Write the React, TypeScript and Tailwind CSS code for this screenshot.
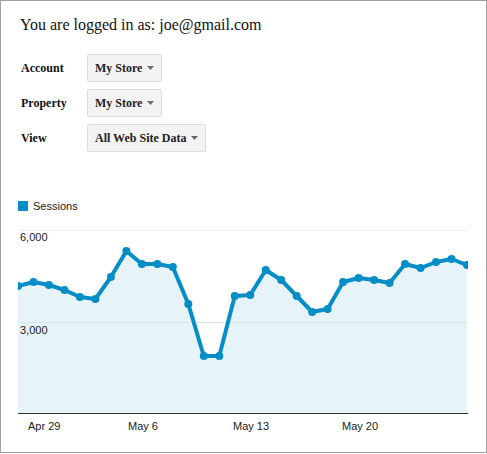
const serif = { fontFamily: '"Liberation Serif", "Times New Roman", serif' };

const rows = [
  { label: 'Account', value: 'My Store' },
  { label: 'Property', value: 'My Store' },
  { label: 'View', value: 'All Web Site Data' },
];

// sessions per day, already in page pixel space (y)
const ys = [286, 282, 285, 290, 297, 299, 277, 251, 264, 264, 267, 304, 356, 356, 296, 295, 270, 280, 296, 312, 309, 282, 278, 280, 283, 264, 268, 262, 259, 265];
const pts = ys.map((y, i) => [18 + (i * 449) / 29, y]);

function Picker({ value }: { value: string }) {
  return (
    <button className="h-[28px] flex items-center gap-[5px] pl-[7px] pr-[7px] bg-[#f3f3f3] border border-[#dcdcdc] rounded-[2px] text-[12px] font-bold text-[#222]">
      <span>{value}</span>
      <svg width="7" height="4" viewBox="0 0 7 4">
        <path d="M0 0h7L3.5 4z" fill="#6a6a6a" />
      </svg>
    </button>
  );
}

function Chart() {
  const line = pts.map((p) => p.join(',')).join(' ');
  const area = `18,413 ${line} 467,413`;
  const labels = [
    { x: 28, t: 'Apr 29' },
    { x: 128, t: 'May 6' },
    { x: 233, t: 'May 13' },
    { x: 342, t: 'May 20' },
  ];
  return (
    <svg width="485" height="225" viewBox="1 220 485 225" className="block" style={{ fontFamily: '"Liberation Sans", Arial, sans-serif' }}>
      <defs>
        <clipPath id="plot">
          <rect x="18" y="220" width="450" height="194" />
        </clipPath>
      </defs>
      <line x1="18" x2="467" y1="230.5" y2="230.5" stroke="#ebebeb" />
      <polygon points={area} fill="#058dc7" fillOpacity="0.1" />
      <line x1="18" x2="467" y1="322.5" y2="322.5" stroke="#d9e2e6" />
      <g clipPath="url(#plot)">
        <polyline points={line} fill="none" stroke="#058dc7" strokeWidth="4" strokeLinejoin="round" />
        {pts.map(([x, y], i) => (
          <circle key={i} cx={x} cy={y} r="4" fill="#058dc7" />
        ))}
      </g>
      <line x1="18" x2="468" y1="413.5" y2="413.5" stroke="#333" />
      <text x="20" y="241" fontSize="11" fill="#222">6,000</text>
      <text x="20" y="334" fontSize="11" fill="#222">3,000</text>
      {labels.map((l) => (
        <text key={l.t} x={l.x} y="430" fontSize="11" fill="#222">{l.t}</text>
      ))}
    </svg>
  );
}

export default function App() {
  return (
    <div className="w-[487px] h-[453px] border border-[#a0a0a0] bg-white text-[#111] overflow-hidden">
      <div className="pl-[19px] pt-[14px]" style={serif}>
        <h1 className="text-[16px] leading-[20px]">You are logged in as: joe@gmail.com</h1>
        <div className="mt-[19px] flex flex-col gap-[7px]">
          {rows.map((r) => (
            <div key={r.label} className="flex items-center">
              <span className="w-[67px] pl-[1px] text-[12px] font-bold">{r.label}</span>
              <Picker value={r.value} />
            </div>
          ))}
        </div>
      </div>
      <div className="mt-[47px] pl-[17px] flex items-center gap-[5px]" style={{ fontFamily: '"Liberation Sans", Arial, sans-serif' }}>
        <span className="w-[10px] h-[10px] bg-[#058dc7]" />
        <span className="text-[11px] leading-[14px] text-[#222]">Sessions</span>
      </div>
      <div className="mt-[7px]">
        <Chart />
      </div>
    </div>
  );
}
